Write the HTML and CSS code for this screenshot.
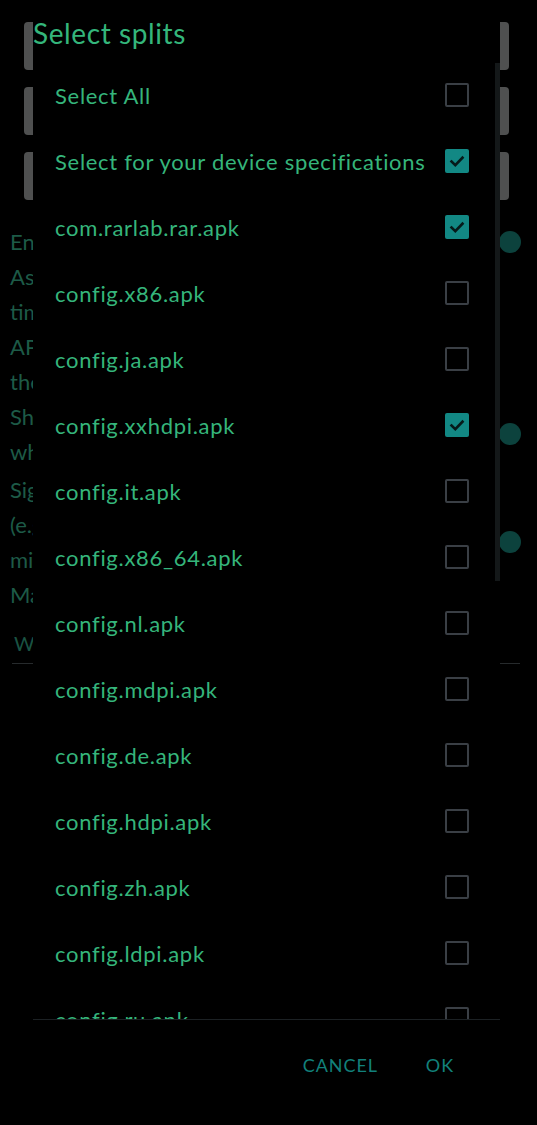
FILE: index.html
```html
<!DOCTYPE html>
<html>
<head>
<meta charset="utf-8">
<link rel="stylesheet" href="styles.css">
</head>
<body>
<div class="screen">
  <div class="app">
    <div class="field"></div>
    <div class="field"></div>
    <div class="field"></div>
    <div class="settings">
      <div class="setting">
        <div class="setting-text"><div>Enable instant install</div></div>
        <div class="switch"><span class="thumb"></span></div>
      </div>
      <div class="setting">
        <div class="setting-text">
          <div>Assume that the APK was signed at the</div>
          <div>time of building, and check the</div>
          <div>APK signature against</div>
          <div>the stored one</div>
        </div>
      </div>
      <div class="setting">
        <div class="setting-text">
          <div>Show the dialog to pick the splits</div>
          <div>when installing an archive</div>
        </div>
        <div class="switch"><span class="thumb"></span></div>
      </div>
      <div class="setting gap">
        <div class="setting-text">
          <div>Sign the APKs before installing</div>
          <div>(e.g. for patched apps that have</div>
          <div>mismatched signatures)</div>
          <div>May take a long time</div>
        </div>
        <div class="switch"><span class="thumb"></span></div>
      </div>
      <div class="section">
        <div class="section-title">Warnings</div>
        <div class="rule"></div>
      </div>
    </div>
  </div>

  <div class="dialog">
    <div class="dialog-title">Select splits</div>
    <div class="dialog-list">
      <div class="row"><span class="label">Select All</span><span class="box"></span></div>
      <div class="row"><span class="label">Select for your device specifications</span><span class="box checked"><svg viewBox="0 0 24 24"><path d="M6.5 12.5l3.8 3.6 7.2-7.4"/></svg></span></div>
      <div class="row"><span class="label">com.rarlab.rar.apk</span><span class="box checked"><svg viewBox="0 0 24 24"><path d="M6.5 12.5l3.8 3.6 7.2-7.4"/></svg></span></div>
      <div class="row"><span class="label">config.x86.apk</span><span class="box"></span></div>
      <div class="row"><span class="label">config.ja.apk</span><span class="box"></span></div>
      <div class="row"><span class="label">config.xxhdpi.apk</span><span class="box checked"><svg viewBox="0 0 24 24"><path d="M6.5 12.5l3.8 3.6 7.2-7.4"/></svg></span></div>
      <div class="row"><span class="label">config.it.apk</span><span class="box"></span></div>
      <div class="row"><span class="label">config.x86_64.apk</span><span class="box"></span></div>
      <div class="row"><span class="label">config.nl.apk</span><span class="box"></span></div>
      <div class="row"><span class="label">config.mdpi.apk</span><span class="box"></span></div>
      <div class="row"><span class="label">config.de.apk</span><span class="box"></span></div>
      <div class="row"><span class="label">config.hdpi.apk</span><span class="box"></span></div>
      <div class="row"><span class="label">config.zh.apk</span><span class="box"></span></div>
      <div class="row"><span class="label">config.ldpi.apk</span><span class="box"></span></div>
      <div class="row"><span class="label">config.ru.apk</span><span class="box"></span></div>
      <div class="scrollbar"></div>
    </div>
    <div class="dialog-actions">
      <span class="btn">CANCEL</span>
      <span class="btn">OK</span>
    </div>
  </div>
</div>
</body>
</html>
```

FILE: styles.css
```css
* { box-sizing: border-box; }
html, body {
  margin: 0;
  padding: 0;
  background: #000;
}
body {
  font-family: "Lato", "Noto Sans", sans-serif;
  overflow: hidden;
}
.screen {
  position: relative;
  width: 537px;
  height: 1125px;
  overflow: hidden;
  background: #000;
}

/* background app (dimmed) */
.app {
  padding-top: 22px;
  display: flex;
  flex-direction: column;
}
.field {
  margin: 0 28px 17px 24px;
  height: 48px;
  background: #4f5050;
  border-radius: 4px;
}
.settings {
  margin-top: 7px;
  display: flex;
  flex-direction: column;
}
.setting {
  display: flex;
  align-items: center;
  justify-content: space-between;
  padding-left: 10px;
}
.setting.gap {
  margin-top: 3px;
}
.setting-text {
  font-size: 22px;
  line-height: 35px;
  color: #1d5a47;
  white-space: nowrap;
}
.switch {
  position: relative;
  width: 60px;
  height: 22px;
  margin-right: 16px;
  flex-shrink: 0;
}
.thumb {
  position: absolute;
  right: 0;
  top: 0;
  width: 22px;
  height: 22px;
  border-radius: 50%;
  background: #0c423d;
}
.section {
  padding: 18px 17px 0 12px;
}
.section-title {
  padding-left: 2px;
  font-size: 20px;
  line-height: 26px;
  color: #1a5343;
}
.rule {
  margin-top: 7px;
  height: 1px;
  background: #262a2c;
}

/* dialog overlay */
.dialog {
  position: absolute;
  left: 33px;
  top: 0;
  width: 467px;
  height: 1125px;
  background: #000;
  display: flex;
  flex-direction: column;
}
.dialog-title {
  height: 62px;
  padding-top: 15px;
  font-size: 28px;
  line-height: 36px;
  color: #34b67b;
  letter-spacing: 0.6px;
}
.dialog-list {
  position: relative;
  height: 958px;
  overflow: hidden;
  border-bottom: 1px solid #1c2124;
}
.row {
  height: 66px;
  display: flex;
  align-items: center;
  justify-content: space-between;
  padding: 0 31px 0 22px;
}
.label {
  font-size: 22px;
  letter-spacing: 0.7px;
  color: #35b57b;
  white-space: nowrap;
}
.box {
  width: 24px;
  height: 24px;
  border: 2px solid #3a3f45;
  border-radius: 2px;
  flex-shrink: 0;
  display: flex;
}
.box.checked {
  border: none;
  background: #128884;
}
.box svg {
  width: 24px;
  height: 24px;
}
.box svg path {
  fill: none;
  stroke: #061a1a;
  stroke-width: 2.6;
  stroke-linecap: square;
}
.scrollbar {
  position: absolute;
  right: 0;
  top: 1px;
  width: 5px;
  height: 518px;
  background: #141819;
}
.dialog-actions {
  height: 92px;
  display: flex;
  justify-content: flex-end;
  align-items: flex-start;
  padding: 33px 46px 0 0;
  gap: 48px;
}
.btn {
  font-size: 18px;
  line-height: 24px;
  color: #12807b;
  letter-spacing: 0.9px;
}
```
